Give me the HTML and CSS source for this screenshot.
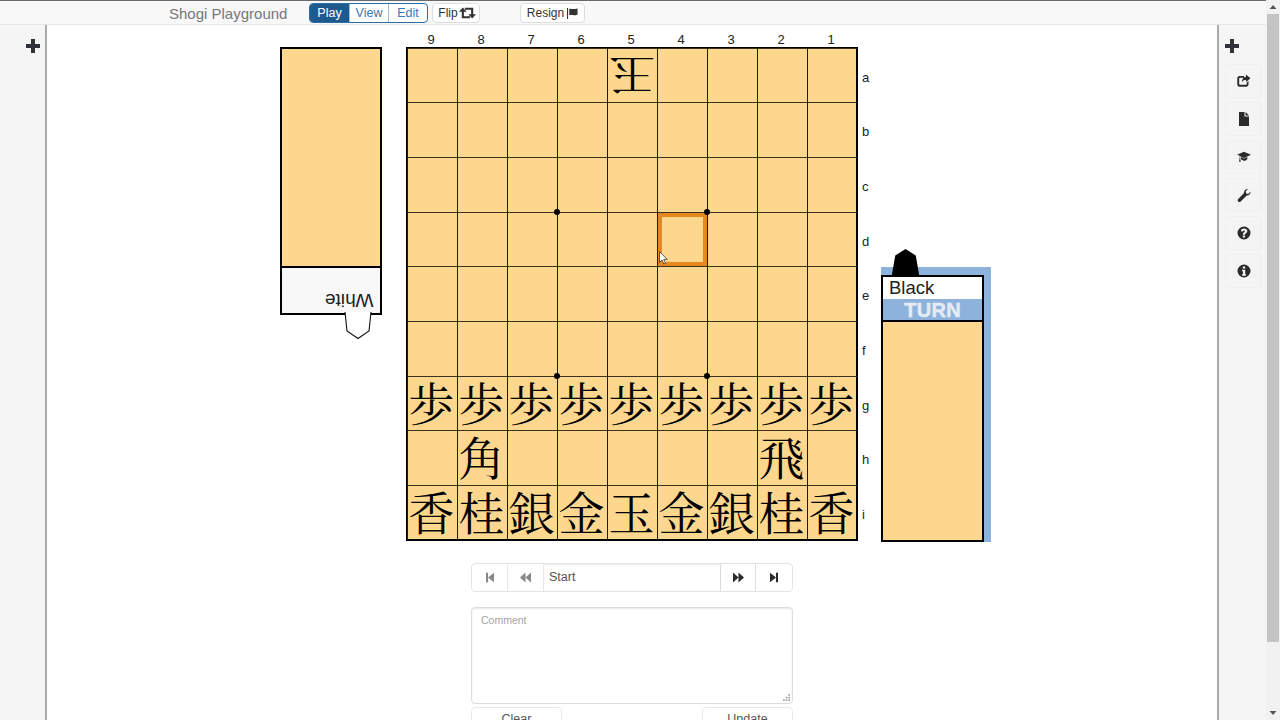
FILE: index.html
```html
<!DOCTYPE html>
<html lang="en">
<head>
<meta charset="utf-8">
<title>Shogi Playground</title>
<link rel="stylesheet" href="styles.css">
</head>
<body>
<div class="page">
  <div class="window">
    <header class="nav">
      <span class="brand">Shogi Playground</span>
      <div class="mode-group">
        <span class="mode active">Play</span><span class="mode">View</span><span class="mode">Edit</span>
      </div>
      <span class="nav-btn flip">Flip<svg class="ico-flip" viewBox="0 0 20 14"><path class="flip-arrowhead" d="M0 5.500 4.500 .5 9 5.500zM11 8.500 15.500 13.500 20 8.500z"/><path class="flip-shaft" d="M4.500 4V12H13M7 2H15.500V10"/></svg></span>
      <span class="nav-btn resign">Resign <svg class="ico-flag" viewBox="0 0 12 12"><path d="M0 0h1.200v12H0zM2.500 1c2-1 3.500.8 6.500 0 1-.2 2-.5 2.500-.8V7c-3 1.800-6 .2-9 1z"/></svg></span>
    </header>
    <div class="body">
      <aside class="side side-left">
        <svg class="plus" viewBox="0 0 14 14"><path d="M5 0h4v5h5v4H9v5H5V9H0V5h5z"/></svg>
      </aside>
      <main class="main">
        <section class="hand hand-white">
          <div class="tray tray-white"></div>
          <div class="label-white"><span>White</span></div>
          <svg class="turn-piece-white" viewBox="0 0 28 30"><path d="M1 1 3 20 14 27.500 25 20 27 1"/></svg>
        </section>
        <section class="board-col">
          <div class="files"><span>9</span><span>8</span><span>7</span><span>6</span><span>5</span><span>4</span><span>3</span><span>2</span><span>1</span></div>
          <div class="board">
            <div class="grid">
              <div class="cell"></div><div class="cell"></div><div class="cell"></div><div class="cell"></div><div class="cell"><span class="flip-piece">玉</span></div><div class="cell"></div><div class="cell"></div><div class="cell"></div><div class="cell"></div>
              <div class="cell"></div><div class="cell"></div><div class="cell"></div><div class="cell"></div><div class="cell"></div><div class="cell"></div><div class="cell"></div><div class="cell"></div><div class="cell"></div>
              <div class="cell"></div><div class="cell"></div><div class="cell"></div><div class="cell"></div><div class="cell"></div><div class="cell"></div><div class="cell"></div><div class="cell"></div><div class="cell"></div>
              <div class="cell"></div><div class="cell"></div><div class="cell"></div><div class="cell"></div><div class="cell"></div><div class="cell selected"></div><div class="cell"></div><div class="cell"></div><div class="cell"></div>
              <div class="cell"></div><div class="cell"></div><div class="cell"></div><div class="cell"></div><div class="cell"></div><div class="cell"></div><div class="cell"></div><div class="cell"></div><div class="cell"></div>
              <div class="cell"></div><div class="cell"></div><div class="cell"></div><div class="cell"></div><div class="cell"></div><div class="cell"></div><div class="cell"></div><div class="cell"></div><div class="cell"></div>
              <div class="cell">歩</div><div class="cell">歩</div><div class="cell">歩</div><div class="cell">歩</div><div class="cell">歩</div><div class="cell">歩</div><div class="cell">歩</div><div class="cell">歩</div><div class="cell">歩</div>
              <div class="cell"></div><div class="cell">角</div><div class="cell"></div><div class="cell"></div><div class="cell"></div><div class="cell"></div><div class="cell"></div><div class="cell">飛</div><div class="cell"></div>
              <div class="cell">香</div><div class="cell">桂</div><div class="cell">銀</div><div class="cell">金</div><div class="cell">玉</div><div class="cell">金</div><div class="cell">銀</div><div class="cell">桂</div><div class="cell">香</div>
            </div>
            <i class="star star-a"></i><i class="star star-b"></i><i class="star star-c"></i><i class="star star-d"></i>
            <svg class="cursor" viewBox="0 0 9 14"><path d="M.5.5v11l2.500-2.500 1.800 4 1.700-.8-1.800-3.800h3.500z"/></svg>
          </div>
          <div class="moves">
            <span class="mv"><svg class="mv-ico dim" viewBox="0 0 10 12"><path d="M0 0h2.500v12H0zM10 0v12L2.500 6z"/></svg></span>
            <span class="mv"><svg class="mv-ico dim wide" viewBox="0 0 13 12"><path d="M6.500 0v12L0 6zM13 0v12L6.500 6z"/></svg></span>
            <span class="mv-input">Start</span>
            <span class="mv"><svg class="mv-ico wide" viewBox="0 0 13 12"><path d="M0 0v12l6.500-6zM6.500 0v12L13 6z"/></svg></span>
            <span class="mv"><svg class="mv-ico" viewBox="0 0 10 12"><path d="M7.500 0H10v12H7.500zM0 0v12l7.500-6z"/></svg></span>
          </div>
          <div class="comment">
            <span class="placeholder">Comment</span>
            <svg class="grip" viewBox="0 0 8 8"><path d="M6 0h2v2H6zM6 3h2v2H6zM3 3h2v2H3zM6 6h2v2H6zM3 6h2v2H3zM0 6h2v2H0z"/></svg>
          </div>
          <div class="comment-actions"><span class="act">Clear</span><span class="act">Update</span></div>
        </section>
        <section class="ranks"><span>a</span><span>b</span><span>c</span><span>d</span><span>e</span><span>f</span><span>g</span><span>h</span><span>i</span></section>
        <section class="hand-black">
          <svg class="turn-piece-black" viewBox="0 0 30 30"><path d="M15 0 26 7l4 23H0L4 7z"/></svg>
          <div class="black-box">
            <div class="name-black">Black</div>
            <div class="turn">TURN</div>
            <div class="tray-black"></div>
          </div>
        </section>
      </main>
      <aside class="side side-right">
        <svg class="plus plus-right" viewBox="0 0 14 14"><path d="M5 0h4v5h5v4H9v5H5V9H0V5h5z"/></svg>
        <span class="tool"><svg viewBox="0 0 14 14"><path d="M2.500 2H7v1.800H3a.8.8 0 0 0-.8.8V10c0 .5.300.8.800.8h6c.5 0 .8-.3.800-.8V8.500L11.500 7v3.500c0 1.200-1 2.200-2.200 2.200H2.500A2.200 2.200 0 0 1 .300 10.500V4.200C.300 3 1.300 2 2.500 2zM9 .5l4.500 3.800L9 8V6C7 6 5.500 6.500 5 8.500 4.800 5.500 6.500 3 9 2.800z"/></svg></span>
        <span class="tool"><svg viewBox="0 0 14 14"><path d="M2 0h5.500v4.500H12V14H2zM8.500 0 12 3.500H8.500z"/></svg></span>
        <span class="tool"><svg viewBox="0 0 16 14"><path d="M8 1 16 4.500 8 8 3.500 6v2.500c.3.300.4.600.3 1l.5 3H2.300l.5-3c-.1-.4 0-.7.300-1V5.600L0 4.500zM4.500 7l3.500 1.800L11.800 7v2.300C11 11 9 11.500 7.500 11.200c-1-.2-2-.7-3-1.500z"/></svg></span>
        <span class="tool"><svg viewBox="0 0 14 14"><path d="M13.500 3.500c.3 2.200-1.500 4.300-3.800 4.100L3.700 13.500c-.8.700-1.900.7-2.500 0-.7-.7-.7-1.700 0-2.500L7 5C6.700 2.700 8.800.7 11 1L8.700 3.300l.5 2.100 2.100.5z"/></svg></span>
        <span class="tool"><svg viewBox="0 0 14 14"><path fill-rule="evenodd" d="M7 .5a6.500 6.500 0 1 1 0 13 6.500 6.500 0 0 1 0-13zM5.800 9.500v2h2.200v-2zM7 2.500C5.200 2.500 4 3.500 3.900 5.300l2 .3C6 4.800 6.400 4.400 7 4.400c.6 0 1 .3 1 .8 0 .9-2.200 1.200-2.200 3.500h2.200c0-1.400 2.300-1.600 2.300-3.700 0-1.600-1.500-2.500-3.300-2.500z"/></svg></span>
        <span class="tool"><svg viewBox="0 0 14 14"><path fill-rule="evenodd" d="M7 .5a6.500 6.500 0 1 1 0 13 6.500 6.500 0 0 1 0-13zM5.800 2.500v2h2.400v-2zM5 5.800v1.500h1v3H5v1.500h4v-1.500H8.200V5.800z"/></svg></span>
      </aside>
    </div>
  </div>
  <div class="scrollbar">
    <svg class="arrow" viewBox="0 0 14 14"><path d="M3.500 9 7 5l3.500 4z"/></svg>
    <div class="thumb"></div>
    <svg class="arrow arrow-down" viewBox="0 0 14 14"><path d="M3.500 5 7 9l3.500-4z"/></svg>
  </div>
</div>
</body>
</html>
```
FILE: styles.css
```css
* { box-sizing: border-box; }
html, body { margin: 0; height: 100%; overflow: hidden; background: #fff; }
body { font-family: "Liberation Sans", Arial, sans-serif; color: #333; }
svg { display: block; fill: currentColor; }

.page { display: flex; width: 1280px; height: 720px; overflow: hidden; }
.window { flex: 1; display: flex; flex-direction: column; min-width: 0; }

.nav {
  flex: none; height: 25px; display: flex; align-items: center;
  padding: 1px 0 0 169px;
  background: #f8f8f8; border-top: 1px solid #6b6b6b; border-bottom: 1px solid #e7e7e7;
}
.brand { font-size: 15px; color: #777; width: 140px; }
.mode-group { display: flex; height: 20px; border: 1px solid #2e6da4; border-radius: 4px; overflow: hidden; background: #fff; }
.mode { width: 39px; font-size: 12.500px; line-height: 18px; text-align: center; color: #337ab7; border-left: 1px solid #9dbcd8; }
.mode:first-child { border-left: 0; }
.mode.active { background: #1f5a8f; color: #fff; }
.nav-btn {
  display: flex; align-items: center; justify-content: center; height: 20px;
  font-size: 12px; color: #333; background: #fff; border: 1px solid #ddd; border-radius: 4px;
}
.flip { width: 48px; margin-left: 4px; padding-left: 2px; }
.resign { width: 65px; margin-left: 40px; gap: 3px; }
.ico-flip { width: 17px; height: 12px; margin-left: 1px; }
.flip-shaft { fill: none; stroke: currentColor; stroke-width: 2.500px; }
.ico-flag { width: 11px; height: 11px; }

.body { flex: 1; display: flex; min-height: 0; }
.side { flex: none; background: #f5f5f5; }
.side-left { width: 47px; border-right: 2px solid #aaa; padding: 14px 0 0 26px; }
.side-right { width: 49px; border-left: 2px solid #aaa; padding: 14px 0 0 6px; display: flex; flex-direction: column; }
.plus { width: 14px; height: 14px; color: #2f3338; }
.plus-right { margin-bottom: 11px; }
.tool {
  flex: none; width: 37px; height: 34px; margin-bottom: 4px; display: flex; align-items: center; justify-content: center;
  background: #f4f4f4; border: 1px solid #efefef; border-radius: 3px; color: #2b2b2b;
}
.tool svg { width: 14px; height: 14px; }

.main { flex: 1; min-width: 0; display: flex; align-items: flex-start; padding: 0 0 0 233px; background: #fff; }

.hand { position: relative; flex: none; }
.hand-white { width: 102px; margin: 22px 24px 0 0; height: 268px; border: 2px solid #000; background: #f8f8f8; display: flex; flex-direction: column; }
.tray { height: 219px; flex: none; background: #fdd78e; border-bottom: 2px solid #000; }
.label-white { flex: 1; display: flex; justify-content: flex-end; align-items: flex-end; padding: 0 6px 1px 0; }
.label-white span { display: block; font-size: 19px; line-height: 24px; color: #222; transform: rotate(180deg); }
.turn-piece-white { position: absolute; left: 62px; top: 262px; width: 28px; height: 30px; fill: #fff; stroke: #111; stroke-width: 1.100px; }

.board-col { flex: none; width: 452px; display: flex; flex-direction: column; align-items: center; }
.files { width: 450px; height: 22px; margin-right: 2px; display: grid; grid-template-columns: repeat(9, 50px); align-items: end; font-size: 13px; text-align: center; color: #222; line-height: 15px; }
.board { position: relative; width: 452px; height: 494px; border: 2px solid #000; background: #fdd78e; }
.grid {
  margin: -1.500px -1px -1px; width: 450px; height: 492px; display: grid;
  grid-template-columns: repeat(9, 50px); grid-template-rows: repeat(9, 1fr);
}
.cell {
  display: flex; align-items: center; justify-content: center;
  padding: 0 2px 5px 0; min-height: 0;
  border-left: 1px solid #1d1a14; border-top: 1px solid #3a3120;
  font-family: "Noto Serif CJK JP", "Noto Sans CJK JP", serif;
  font-size: 46px; line-height: 46px; color: #000;
}
.flip-piece { display: block; margin-top: 11px; transform: rotate(180deg) scale(1.02, .9); }
.selected { box-shadow: inset 0 0 0 4px #e8871e; }
.star { position: absolute; width: 6px; height: 6px; border-radius: 50%; background: #000; }
.star-a { left: 146px; top: 160px; }
.star-b { left: 296px; top: 160px; }
.star-c { left: 146px; top: 324px; }
.star-d { left: 296px; top: 324px; }
.cursor { position: absolute; left: 251px; top: 202px; width: 9px; height: 14px; fill: #fff; stroke: #333; stroke-width: .8px; }

.moves { width: 322px; height: 29px; margin-top: 22px; display: flex; border: 1px solid #e4e4e4; border-radius: 4px; background: #fff; flex: none; }
.mv { flex: none; width: 36px; display: flex; align-items: center; justify-content: center; border-right: 1px solid #e8e8e8; color: #2b2b2b; }
.mv:nth-child(4) { border-left: 1px solid #dcdcdc; border-right: 1px solid #e0e0e0; }
.mv:last-child { border: 0; }
.mv-ico { width: 8px; height: 11px; }
.mv-ico.wide { width: 11px; }
.mv-ico.dim { color: #888; }
.mv-input { flex: 1; padding-left: 5px; font-size: 12.500px; line-height: 27px; color: #555; box-shadow: inset 0 1px 1px rgba(0,0,0,.08); }

.comment { position: relative; width: 322px; height: 97px; margin-top: 15px; flex: none; border: 1px solid #ddd; border-radius: 4px; box-shadow: inset 0 1px 2px rgba(0,0,0,.1); padding: 5px 9px; }
.placeholder { display: block; font-size: 10.500px; line-height: 14px; color: #a3a3a3; }
.grip { position: absolute; right: 2px; bottom: 2px; width: 7px; height: 7px; color: #aaa; }
.comment-actions { width: 322px; margin-top: 3px; display: flex; justify-content: space-between; flex: none; }
.act { width: 91px; height: 30px; border: 1px solid #e8e8e8; border-radius: 4px; text-align: center; font-size: 12.500px; line-height: 23px; color: #555; }

.ranks { flex: none; width: 23px; margin-top: 25px; height: 492px; padding-left: 4px; display: grid; grid-template-rows: repeat(9, 1fr); font-size: 13px; color: #222; align-items: center; }
.ranks span { display: block; height: 15px; line-height: 15px; }

.hand-black { position: relative; flex: none; width: 110px; height: 275px; margin-top: 242px; padding-top: 8px; background: #8db3dc; }
.black-box { width: 103px; height: 267px; border: 2px solid #000; display: flex; flex-direction: column; }
.name-black { flex: none; height: 22px; background: #fff; font-size: 18.500px; line-height: 21px; padding-left: 6px; color: #222; }
.turn { flex: none; height: 23px; background: #8db3dc; color: #e4ebf2; font-size: 20px; font-weight: bold; line-height: 22px; text-align: center; border-bottom: 2px solid #000; -webkit-text-stroke: .5px #e4ebf2; letter-spacing: .3px; }
.tray-black { flex: 1; background: #fdd78e; }
.turn-piece-black { position: absolute; left: 9px; top: -18px; width: 31px; height: 28px; fill: #000; }

.scrollbar { flex: none; width: 14px; height: 720px; background: #f1f1f1; display: flex; flex-direction: column; }
.arrow { flex: none; width: 14px; height: 14px; color: #555; }
.thumb { flex: none; height: 628px; background: #c4c4c4; margin: 0 1px; }
.arrow-down { margin-top: auto; }
```
